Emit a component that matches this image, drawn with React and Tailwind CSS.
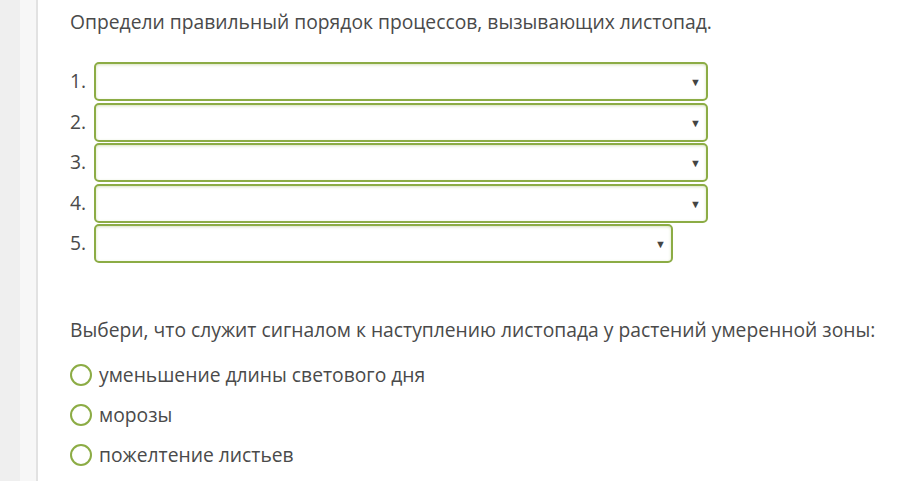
const orderRows = [
  { n: '1.', w: 'w-[614px]' },
  { n: '2.', w: 'w-[614px]' },
  { n: '3.', w: 'w-[614px]' },
  { n: '4.', w: 'w-[614px]' },
  { n: '5.', w: 'w-[579px]' },
]

const options = ['уменьшение длины светового дня', 'морозы', 'пожелтение листьев']

function Select({ width }) {
  return (
    <div className={`${width} h-[39px] rounded-[5px] border-2 border-[#8cac45] bg-white flex items-center justify-end pr-[5px] shadow-[inset_0_1px_3px_rgba(140,172,69,0.35)]`}>
      <span className="text-[11px] leading-none text-[#444]">▼</span>
    </div>
  )
}

export default function App() {
  return (
    <div className="flex w-[906px] h-[481px] overflow-hidden bg-white text-[#4a4a4a]" style={{ fontFamily: '"Open Sans", "Noto Sans", sans-serif' }}>
      <div className="w-[20px] shrink-0 bg-[#efefef]" />
      <div className="w-[18px] shrink-0 bg-[#f7f7f7] border-r-2 border-[#e2e2e2]" />
      <div className="flex-1 pl-[32px] pt-[8px]">
        <p className="text-[19.3px] leading-[28px]">Определи правильный порядок процессов, вызывающих листопад.</p>
        <div className="mt-[26px] flex flex-col gap-[1.5px]">
          {orderRows.map(r => (
            <div key={r.n} className="flex items-center">
              <span className="w-[24px] text-[19.3px]">{r.n}</span>
              <Select width={r.w} />
            </div>
          ))}
        </div>
        <p className="mt-[53px] text-[19.3px] leading-[28px]">Выбери, что служит сигналом к наступлению листопада у растений умеренной зоны:</p>
        <div className="mt-[17px] flex flex-col gap-[12px]">
          {options.map(o => (
            <div key={o} className="flex items-center h-[28px]">
              <span className="w-[22px] h-[22px] rounded-full border-2 border-[#8cac45] bg-white" />
              <span className="ml-[7px] text-[19.3px]">{o}</span>
            </div>
          ))}
        </div>
      </div>
    </div>
  )
}
